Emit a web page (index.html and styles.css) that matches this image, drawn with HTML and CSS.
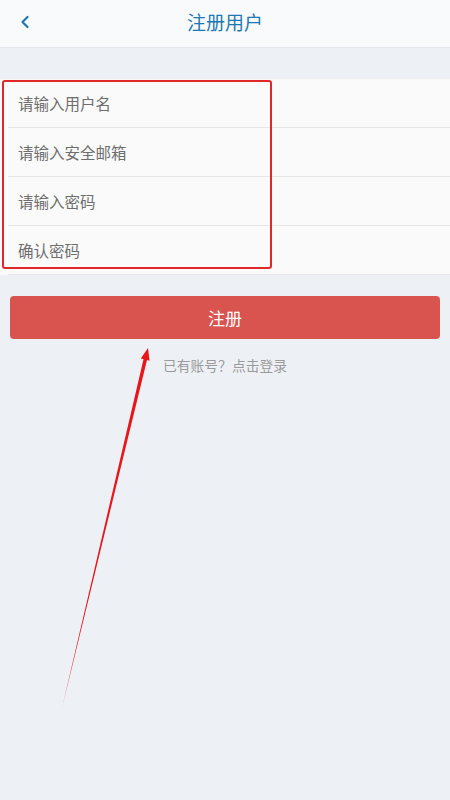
FILE: index.html
```html
<!DOCTYPE html>
<html lang="zh-CN">
<head>
<meta charset="utf-8">
<title>注册用户</title>
<link rel="stylesheet" href="styles.css">
</head>
<body>
<div class="page">
  <header class="header">
    <span class="back">
      <svg width="10" height="14" viewBox="0 0 10 14"><path d="M7.5 2 L2.5 7 L7.5 12" fill="none" stroke="#1e78b4" stroke-width="2.2" stroke-linecap="round" stroke-linejoin="round"/></svg>
    </span>
    <h1 class="title">注册用户</h1>
    <span class="spacer"></span>
  </header>

  <form class="form">
    <div class="row"><input class="field" type="text" placeholder="请输入用户名"></div>
    <div class="row"><input class="field" type="email" placeholder="请输入安全邮箱"></div>
    <div class="row"><input class="field" type="password" placeholder="请输入密码"></div>
    <div class="row"><input class="field" type="password" placeholder="确认密码"></div>
    <div class="mark"></div>
  </form>

  <div class="actions">
    <button class="btn" type="button">注册</button>
    <p class="login">已有账号？点击登录</p>
  </div>

  <svg class="arrow" width="450" height="800" viewBox="0 0 450 800">
    <polygon points="62,708 143.5,359.3 140.8,358.6 148,348 149.6,360.7 147,360.1" fill="#e8161b"/>
  </svg>
</div>
</body>
</html>
```
FILE: styles.css
```css
* { box-sizing: border-box; }
html, body { margin: 0; padding: 0; }
body {
  background: #edf1f6;
  font-family: "Noto Sans CJK SC", "Noto Sans", sans-serif;
  width: 450px;
  height: 800px;
  overflow: hidden;
}
.page { position: relative; width: 450px; height: 800px; }
.header {
  height: 48px;
  background: #f9fafb;
  border-bottom: 1px solid #e3e7ec;
  display: grid;
  grid-template-columns: 48px 1fr 48px;
  align-items: center;
}
.back { display: flex; align-items: center; justify-content: flex-start; padding-left: 20px; padding-bottom: 4px; }
.title {
  margin: 0;
  text-align: center;
  font-size: 19px;
  font-weight: 400;
  color: #1e78b4;
  line-height: 24px;
  padding-bottom: 4px;
}
.form {
  position: relative;
  margin: 31px 0 0 0;
  background: #fafafa;
}
.row {
  height: 49px;
  margin-left: 8px;
  padding-left: 10px;
  border-bottom: 1px solid #e6e7e9;
  display: flex;
  align-items: center;
}
.row:last-of-type { height: 48px; border-bottom: none; }
.field {
  border: none;
  outline: none;
  background: transparent;
  font-family: inherit;
  font-size: 15.5px;
  color: #333;
  padding: 0;
  width: 100%;
  height: 24px;
}
.field::placeholder { color: #6e6e6e; }
.mark {
  position: absolute;
  left: 2px;
  top: 1px;
  width: 270px;
  height: 189px;
  border: 2px solid #e0282a;
  border-radius: 3px;
  pointer-events: none;
}
.actions { padding: 21px 10px 0; }
.btn {
  display: block;
  width: 100%;
  height: 43px;
  border: none;
  border-radius: 4px;
  background: #d9534f;
  color: #fff;
  font-family: inherit;
  font-size: 17px;
  line-height: 20px;
}
.login {
  margin: 16px 0 0;
  text-align: center;
  font-size: 13.8px;
  line-height: 20px;
  color: #9a9a9a;
}
.arrow { position: absolute; left: 0; top: 0; pointer-events: none; }
```
